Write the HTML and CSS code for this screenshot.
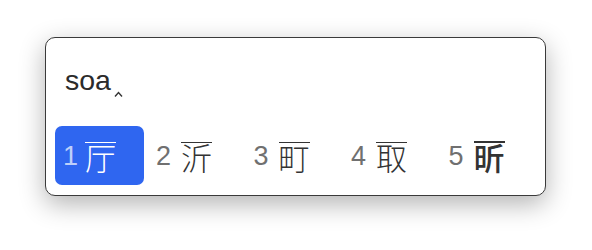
FILE: index.html
```html
<!DOCTYPE html>
<html lang="zh">
<head>
  <meta charset="UTF-8">
  <title>ime</title>
  <link rel="stylesheet" href="styles.css">
</head>
<body>
  <div class="ime-panel">
    <div class="ime-input">soa<svg class="caret" width="9" height="6" viewBox="0 0 9 6"><path d="M1 5.5 L4.5 1.5 L8 5.5" fill="none" stroke="#333" stroke-width="1.4"/></svg></div>
    <div class="ime-list">
      <div class="cand active"><span class="num">1</span><span class="word">厅</span></div>
      <div class="cand"><span class="num">2</span><span class="word">沂</span></div>
      <div class="cand"><span class="num">3</span><span class="word">町</span></div>
      <div class="cand"><span class="num">4</span><span class="word">取</span></div>
      <div class="cand"><span class="num">5</span><span class="word bold">昕</span></div>
    </div>
  </div>
</body>
</html>
```

FILE: styles.css
```css
html, body {
  margin: 0;
  padding: 0;
  background: #ffffff;
}

body {
  font-family: "Liberation Sans", "Noto Sans CJK SC", sans-serif;
  padding: 37px 0 0 45px;
  min-height: 250px;
  box-sizing: border-box;
}

.ime-panel {
  width: 501px;
  height: 159px;
  box-sizing: border-box;
  border: 1px solid #3a3a3a;
  border-radius: 10px;
  background: #ffffff;
  box-shadow: 0 8px 26px rgba(0, 0, 0, 0.3);
  padding: 0 9px;
}

.ime-input {
  font-size: 28.5px;
  color: #2b2b2b;
  height: 88px;
  line-height: 30px;
  padding: 27px 0 0 10px;
  box-sizing: border-box;
}

.caret {
  vertical-align: -7px;
  margin-left: 3px;
}

.ime-list {
  display: flex;
}

.cand {
  width: 98.5px;
  height: 59px;
  border-radius: 7px;
  display: flex;
  align-items: center;
  padding-left: 10px;
  box-sizing: border-box;
}

.cand .num {
  font-size: 27px;
  color: #707070;
  width: 25px;
  margin-top: 2px;
}

.cand .word {
  display: inline-block;
  font-family: "Noto Sans CJK SC", sans-serif;
  font-size: 31px;
  font-weight: 300;
  line-height: 28px;
  color: #333333;
  border-top: 1.5px solid #333333;
  margin-top: 1px;
}

.cand .word.bold {
  font-weight: 500;
  border-top-width: 2px;
}

.cand.active {
  width: 90px;
  margin-right: 2px;
  padding-left: 8px;
  background: #2f66f0;
}

.cand.active .num {
  color: rgba(255, 255, 255, 0.7);
  width: 22px;
}

.cand.active .word {
  color: #ffffff;
  border-top-color: #ffffff;
}
```
